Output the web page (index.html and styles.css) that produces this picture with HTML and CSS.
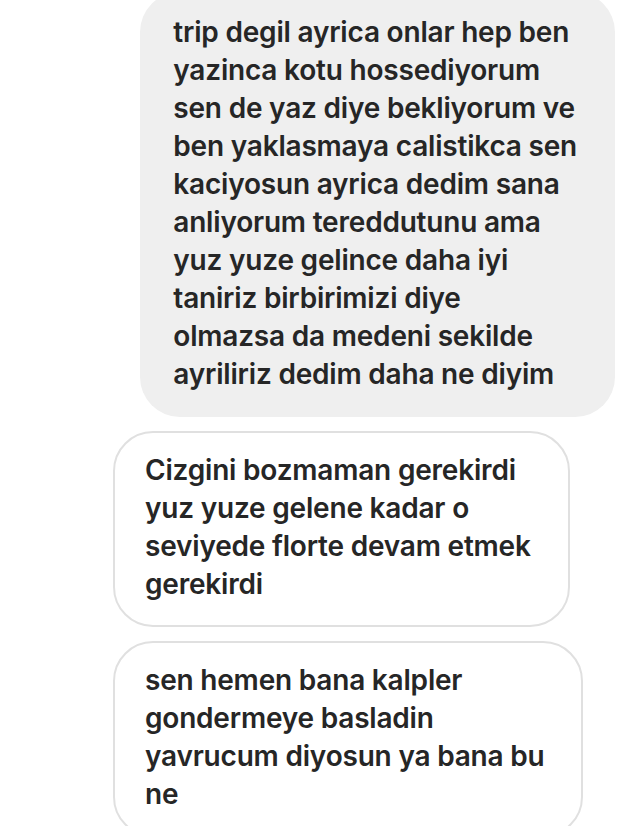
FILE: index.html
```html
<!DOCTYPE html>
<html lang="tr">
<head>
<meta charset="utf-8">
<link rel="stylesheet" href="styles.css">
</head>
<body>
<div class="thread">
  <div class="row row-right">
    <div class="bubble bubble-grey">trip degil ayrica onlar hep ben<br>yazinca kotu hossediyorum<br>sen de yaz diye bekliyorum ve<br>ben yaklasmaya calistikca sen<br>kaciyosun ayrica dedim sana<br>anliyorum tereddutunu ama<br>yuz yuze gelince daha iyi<br>taniriz birbirimizi diye<br>olmazsa da medeni sekilde<br>ayriliriz dedim daha ne diyim</div>
  </div>
  <div class="row row-left">
    <div class="bubble bubble-outline">Cizgini bozmaman gerekirdi<br>yuz yuze gelene kadar o<br>seviyede florte devam etmek<br>gerekirdi</div>
  </div>
  <div class="row row-left">
    <div class="bubble bubble-outline">sen hemen bana kalpler<br>gondermeye basladin<br>yavrucum diyosun ya bana bu<br>ne</div>
  </div>
</div>
</body>
</html>
```
FILE: styles.css
```css
html, body {
  margin: 0;
  padding: 0;
  background: #ffffff;
}
body {
  width: 640px;
  height: 826px;
  overflow: hidden;
  font-family: Inter, "Noto Sans", "Liberation Sans", sans-serif;
  color: #262626;
}
.thread {
  display: flex;
  flex-direction: column;
  gap: 14px;
  margin-top: -8px;
}
.row {
  display: flex;
}
.row-right {
  justify-content: flex-end;
  padding-right: 25px;
}
.row-left {
  justify-content: flex-start;
  padding-left: 113px;
}
.bubble {
  font-size: 28px;
  font-weight: 600;
  letter-spacing: -0.2px;
  line-height: 38px;
  white-space: nowrap;
  border-radius: 40px;
}
.bubble-grey {
  background: #efefef;
  padding: 21px 38px 24px 33px;
}
.bubble-outline {
  background: #ffffff;
  border: 2px solid #e0e0e0;
  padding: 18px 37px 22px 30px;
}
```
